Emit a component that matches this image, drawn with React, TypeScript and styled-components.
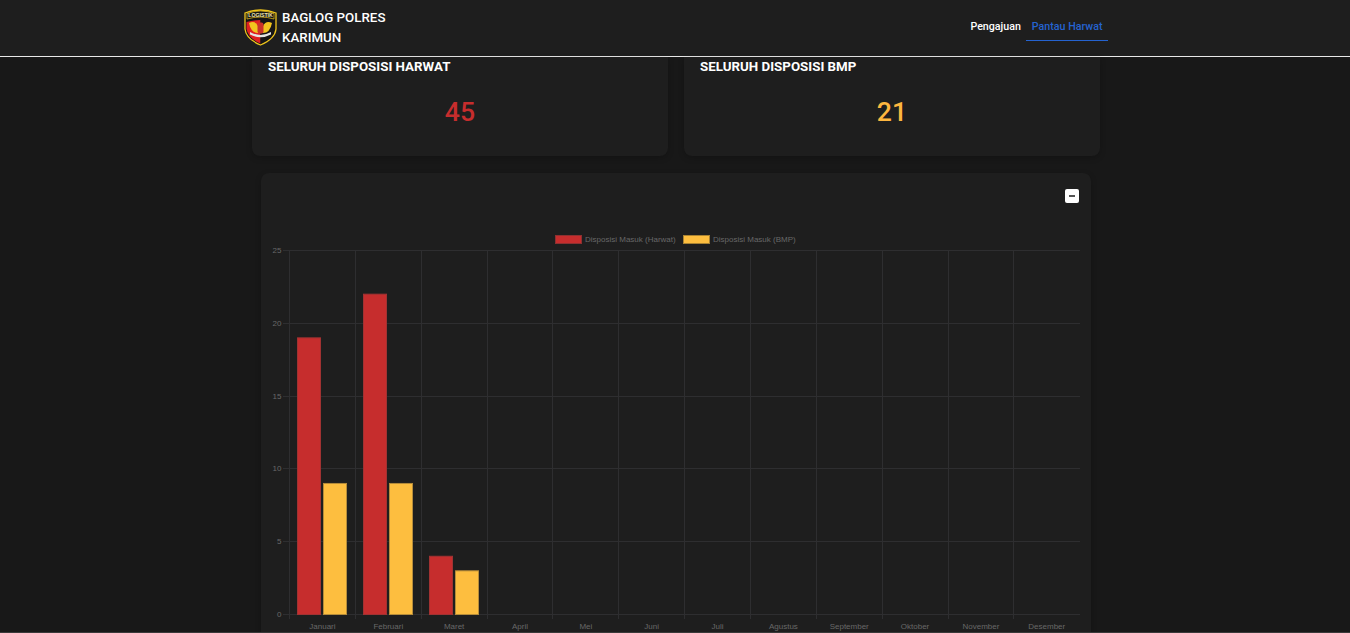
import styled, { createGlobalStyle } from 'styled-components';

const GlobalStyle = createGlobalStyle`
  html, body {
    margin: 0;
    padding: 0;
    height: 633px;
    overflow: hidden;
    background: #181818;
    font-family: Roboto, Arial, sans-serif;
  }
`;

const Page = styled.div`
  height: 633px;
  box-sizing: border-box;
  overflow: hidden;
  border-bottom: 1px solid #3a3a3a;
`;

// ── Header ────────────────────────────────────────────────────────────────────

const Header = styled.header`
  height: 56px;
  background: #1e1e1e;
  border-bottom: 1px solid #e8e8e8;
  display: flex;
  align-items: center;
  justify-content: space-between;
  padding: 0 242px 0 243px;
`;

const Brand = styled.div`
  display: flex;
  align-items: center;
  gap: 4px;
`;

const LogoSvg = styled.svg`
  display: block;
  margin-bottom: 3px;
`;

const BrandName = styled.div`
  width: 115px;
  font-size: 13.33px;
  line-height: 20px;
  font-weight: 500;
  color: #fff;
`;

const Nav = styled.nav`
  display: flex;
  align-items: center;
  margin-bottom: 3px;
`;

const NavLink = styled.a<{ $active?: boolean }>`
  font-size: 10.67px;
  line-height: 13px;
  font-weight: 500;
  padding: 7px 5.5px;
  color: ${({ $active }) => ($active ? '#2563d0' : '#fff')};
  border-bottom: 1px solid ${({ $active }) => ($active ? '#2563d0' : 'transparent')};
`;

// ── Summary cards ─────────────────────────────────────────────────────────────

const Content = styled.main`
  width: 848px;
  margin-left: 252px;
`;

const CardRow = styled.section`
  display: grid;
  grid-template-columns: 416px 416px;
  gap: 16px;
`;

const SummaryCard = styled.div`
  height: 99px;
  box-sizing: border-box;
  padding: 2px 16px 0;
  background: #1e1e1e;
  border-radius: 0 0 8px 8px;
  box-shadow: 0 2px 6px rgba(0, 0, 0, 0.2);
`;

const SummaryTitle = styled.h3`
  margin: 0;
  font-size: 13.33px;
  line-height: 16px;
  font-weight: 700;
  color: #fff;
`;

const SummaryValue = styled.div<{ $color: string }>`
  margin-top: 19px;
  text-align: center;
  font-size: 26.67px;
  line-height: 36px;
  font-weight: 500;
  color: ${({ $color }) => $color};
`;

// ── Chart card ────────────────────────────────────────────────────────────────

const ChartCard = styled.section`
  width: 830px;
  height: 480px;
  margin: 17px 0 0 9px;
  background: #1e1e1e;
  border-radius: 8px;
  box-shadow: 0 2px 6px rgba(0, 0, 0, 0.2);
  position: relative;
`;

const CollapseButton = styled.button`
  position: absolute;
  top: 16px;
  right: 12px;
  width: 14px;
  height: 14px;
  padding: 0;
  border: none;
  border-radius: 2px;
  background: #fff;
  display: flex;
  align-items: center;
  justify-content: center;
`;

const CollapseBar = styled.span`
  width: 6px;
  height: 2px;
  background: #555;
`;

const ChartSvg = styled.svg`
  display: block;
  position: absolute;
  top: 0;
  left: 0;
`;

// Chart geometry, in page coordinates moved to the card's origin (261, 173).
const months = ['Januari', 'Februari', 'Maret', 'April', 'Mei', 'Juni', 'Juli', 'Agustus', 'September', 'Oktober', 'November', 'Desember'];
const harwat = [19, 22, 4];
const bmp = [9, 9, 3];
const plotLeft = 28.5;
const plotRight = 818.7;
const plotTop = 77;
const plotBottom = 441;
const colWidth = (plotRight - plotLeft) / 12;
const yFor = (v: number) => plotBottom - (v / 25) * (plotBottom - plotTop);
const labelColor = '#686868';
const gridColor = '#2e2e30';

function Chart() {
  return (
    <ChartSvg width={830} height={480} fontFamily="'Liberation Sans', Arial, sans-serif" fontSize={8}>
      <rect x={294.5} y={62.5} width={26} height={8} fill="#c62d2d" stroke="#8c3030" />
      <text x={324} y={69} fill={labelColor}>Disposisi Masuk (Harwat)</text>
      <rect x={422.5} y={62.5} width={26} height={8} fill="#fdbe3f" stroke="#a88232" />
      <text x={452} y={69} fill={labelColor}>Disposisi Masuk (BMP)</text>

      {[0, 5, 10, 15, 20, 25].map((v) => (
        <g key={v}>
          <line x1={22} x2={819} y1={Math.round(yFor(v)) + 0.5} y2={Math.round(yFor(v)) + 0.5} stroke={gridColor} />
          <text x={20.5} y={yFor(v) + 3} textAnchor="end" fill={labelColor}>{v}</text>
        </g>
      ))}

      {Array.from({ length: 12 }, (_, i) => {
        const x = Math.floor(plotLeft + i * colWidth) + 0.5;
        return <line key={i} x1={x} x2={x} y1={plotTop} y2={plotBottom + 5} stroke={gridColor} />;
      })}

      {harwat.map((v, i) => {
        const x = Math.round(36 + i * colWidth);
        return <rect key={i} x={x + 0.5} y={yFor(v) + 0.5} width={23} height={plotBottom - yFor(v)} fill="#c62d2d" stroke="#a13232" />;
      })}
      {bmp.map((v, i) => {
        const x = Math.round(62 + i * colWidth);
        return <rect key={i} x={x + 0.5} y={yFor(v) + 0.5} width={23} height={plotBottom - yFor(v)} fill="#fdbe3f" stroke="#b58c3a" />;
      })}

      {months.map((m, i) => (
        <text key={m} x={plotLeft + (i + 0.5) * colWidth} y={456} textAnchor="middle" fill={labelColor}>{m}</text>
      ))}
    </ChartSvg>
  );
}

function Logo() {
  return (
    <LogoSvg width={35} height={38} viewBox="0 0 35 38">
      <path d="M2 5 Q17.5 -1 33 5 L33 21 Q32 31 17.5 37 Q3 31 2 21 Z" fill="#141414" stroke="#eec41c" strokeWidth={1.3} />
      <path d="M4 5.5 Q17.5 0.5 31 5.5 L31 11 Q17.5 7 4 11 Z" fill="none" stroke="#eec41c" strokeWidth={0.7} />
      <path d="M3.5 14 Q10 12 17.5 12 V35.5 Q5 30 3.5 21 Z" fill="#e02020" />
      <path d="M17.5 12 Q25 12 31.5 14 V21 Q30 30 17.5 35.5 Z" fill="#161616" />
      <path d="M6 15 Q12 12 15 18 L15 25 Q8 25 6 15 Z" fill="#f2c41e" />
      <path d="M29 15 Q23 12 20 18 L20 25 Q27 25 29 15 Z" fill="#f2c41e" />
      <rect x={14.5} y={14.5} width={6} height={11} rx={2} fill="#c9322a" />
      <path d="M7 24 Q17.5 30 28 24 L28 26.5 Q17.5 32 7 26.5 Z" fill="#e4e4e4" />
      <text x={17.5} y={8.6} textAnchor="middle" fill="#f0e8b0" fontSize={5.2} fontWeight={700} fontFamily="'Liberation Sans', Arial, sans-serif">LOGISTIK</text>
    </LogoSvg>
  );
}

export default function App() {
  return (
    <Page>
      <GlobalStyle />
      <Header>
        <Brand>
          <Logo />
          <BrandName>BAGLOG POLRES KARIMUN</BrandName>
        </Brand>
        <Nav>
          <NavLink>Pengajuan</NavLink>
          <NavLink $active>Pantau Harwat</NavLink>
        </Nav>
      </Header>
      <Content>
        <CardRow>
          <SummaryCard>
            <SummaryTitle>SELURUH DISPOSISI HARWAT</SummaryTitle>
            <SummaryValue $color="#c62d2d">45</SummaryValue>
          </SummaryCard>
          <SummaryCard>
            <SummaryTitle>SELURUH DISPOSISI BMP</SummaryTitle>
            <SummaryValue $color="#fdb63f">21</SummaryValue>
          </SummaryCard>
        </CardRow>
        <ChartCard>
          <CollapseButton aria-label="collapse"><CollapseBar /></CollapseButton>
          <Chart />
        </ChartCard>
      </Content>
    </Page>
  );
}
